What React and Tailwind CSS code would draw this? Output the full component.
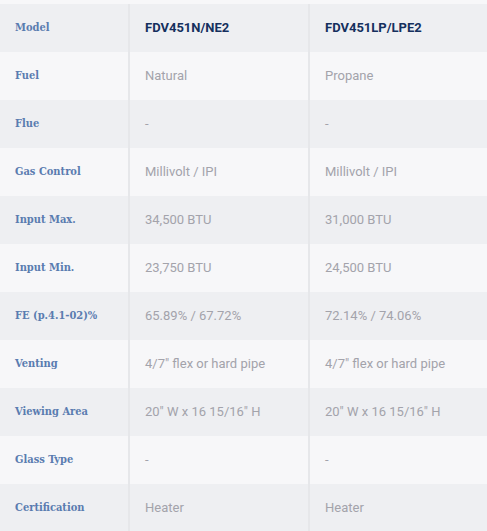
import React from "react";

const rows = [
  ["Model", "FDV451N/NE2", "FDV451LP/LPE2", true],
  ["Fuel", "Natural", "Propane"],
  ["Flue", "-", "-"],
  ["Gas Control", "Millivolt / IPI", "Millivolt / IPI"],
  ["Input Max.", "34,500 BTU", "31,000 BTU"],
  ["Input Min.", "23,750 BTU", "24,500 BTU"],
  ["FE (p.4.1-02)%", "65.89% / 67.72%", "72.14% / 74.06%"],
  ["Venting", "4/7\" flex or hard pipe", "4/7\" flex or hard pipe"],
  ["Viewing Area", "20\" W x 16 15/16\" H", "20\" W x 16 15/16\" H"],
  ["Glass Type", "-", "-"],
  ["Certification", "Heater", "Heater"],
];

export default function App() {
  return (
    <div className="w-[487px] h-[531px] overflow-hidden bg-[#f7f7f9] pt-1">
      {rows.map(([label, a, b, head], i) => {
        const bg = i % 2 === 0 ? "bg-[#eeeff2]" : "bg-[#f7f7f9]";
        const valCls = head
          ? "text-[#15305e] font-bold text-[13px]"
          : "text-[#a3a3ab] text-[13px]";
        return (
          <div key={i} className={`grid grid-cols-[130px_180px_1fr] h-12 ${bg}`}>
            <div className="border-r-2 border-[#e6e7ea] flex items-center pl-[15px]">
              <span
                className="text-[11px] font-bold text-[#5a7cb0]"
                style={{ fontFamily: '"DejaVu Serif Condensed", "DejaVu Serif", serif' }}
              >
                {label}
              </span>
            </div>
            <div className="border-r-2 border-[#e6e7ea] flex items-center pl-[15px]">
              <span className={valCls} style={{ fontFamily: 'Roboto, "Noto Sans", sans-serif' }}>
                {a}
              </span>
            </div>
            <div className="flex items-center pl-[15px]">
              <span className={valCls} style={{ fontFamily: 'Roboto, "Noto Sans", sans-serif' }}>
                {b}
              </span>
            </div>
          </div>
        );
      })}
    </div>
  );
}
